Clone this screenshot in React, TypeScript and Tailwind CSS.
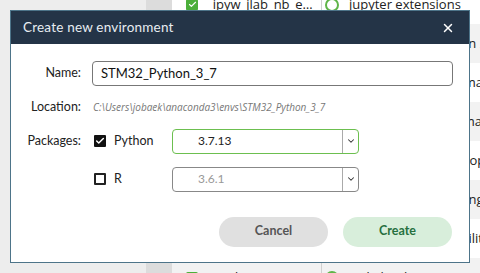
import { X, Check, ChevronDown } from 'lucide-react'

type Row = { name: string; desc: string; bg: string }

const rows: Row[] = [
  { name: '_ipyw_jlab_nb_ext_conf', desc: 'jupyter extensions', bg: 'bg-white' },
  { name: 'alabaster', desc: 'Configurable, python 2+3 compatible sphinx theme', bg: 'bg-[#f2f2f2]' },
  { name: 'anaconda', desc: 'Simplifies package management and deployment', bg: 'bg-white' },
  { name: 'anaconda-client', desc: 'Anaconda.org command line 2 client library', bg: 'bg-[#f2f2f2]' },
  { name: 'anaconda-navigator', desc: 'Anaconda.org desktop gui that allows you', bg: 'bg-white' },
  { name: 'anaconda-project', desc: 'Tool for encapsulating, running, and reproducing', bg: 'bg-[#f2f2f2]' },
  { name: 'anyio', desc: 'High level compatibility layer for multiple, e.g.', bg: 'bg-white' },
  { name: 'appdirs', desc: 'Hide boolean compatibility layer', bg: 'bg-[#f2f2f2]' },
]

function Background() {
  return (
    <div className="flex h-full font-['Open_Sans',sans-serif] text-[13px] text-[#222]">
      <div className="w-[146px] shrink-0 bg-[#ededed]" />
      <div className="w-[26px] shrink-0 bg-[#dcdcdc]" />
      <div className="flex-1 flex flex-col -mt-[15px] overflow-hidden">
        {rows.map((r, i) => (
          <div key={i} className={`flex h-[39px] shrink-0 items-center ${r.bg}`}>
            <div className="w-[14px] shrink-0" />
            <div className="w-[12px] h-[12px] shrink-0 bg-[#4caf3a] rounded-[2px] flex items-center justify-center">
              <Check size={9} strokeWidth={3} className="text-white" />
            </div>
            <div className="w-[121px] shrink-0 pl-[9px] truncate whitespace-nowrap">{r.name}</div>
            <div className="h-full w-px shrink-0 bg-[#d0d0d0] ml-[2px]" />
            <div className="w-[14px] h-[14px] shrink-0 rounded-full border-2 border-[#5fb548] ml-[3px]" />
            <div className="pl-[10px] whitespace-nowrap">{r.desc}</div>
          </div>
        ))}
      </div>
    </div>
  )
}

function Checkbox({ checked }: { checked: boolean }) {
  return checked ? (
    <div className="w-[12px] h-[12px] bg-[#111] rounded-[1px] flex items-center justify-center">
      <Check size={10} strokeWidth={3.5} className="text-white" />
    </div>
  ) : (
    <div className="w-[12px] h-[12px] border-2 border-[#222] rounded-[1px]" />
  )
}

function Select({ value, active }: { value: string; active: boolean }) {
  return (
    <div
      className={`flex w-[187px] h-[25px] rounded-[4px] border ${
        active ? 'border-[#6cbf4f]' : 'border-[#888]'
      }`}
    >
      <div className={`flex-1 pl-[25px] flex items-center text-[12px] ${active ? 'text-[#222]' : 'text-[#999]'}`}>
        {value}
      </div>
      <div className="w-px bg-[#aaa]" />
      <div className="w-[15px] flex items-center justify-center">
        <ChevronDown size={10} strokeWidth={2.5} className="text-[#333]" />
      </div>
    </div>
  )
}

export default function App() {
  return (
    <div className="relative w-[480px] h-[273px] overflow-hidden bg-[#ededed]">
      <Background />

      {/* Dialog */}
      <div className="absolute left-[10px] top-[10px] w-[460px] h-[253px] border border-[#4d7489] bg-white flex flex-col font-['Lato',sans-serif]">
        <div className="h-[33px] bg-[#243447] flex items-center pl-[12px] pr-[14px]">
          <span className="text-[13.5px] text-[#e8edf2] tracking-[0.2px]">Create new environment</span>
          <X size={14} strokeWidth={2.5} className="ml-auto text-white" />
        </div>

        <div className="flex flex-col">
          {/* Name */}
          <div className="flex items-center mt-[17px]">
            <div className="w-[70px] text-right text-[12.5px] text-[#222]">Name:</div>
            <div className="ml-[11px] w-[361px] h-[25px] border border-[#777] rounded-[4px] flex items-center pl-[8px] text-[13px] text-[#111]">
              STM32_Python_3_7
            </div>
          </div>

          {/* Location */}
          <div className="flex items-center mt-[12px]">
            <div className="w-[70px] text-right text-[12.5px] text-[#222]">Location:</div>
            <div className="ml-[12px] text-[10px] italic text-[#777] font-['Open_Sans',sans-serif]">
              C:\Users\jobaek\anaconda3\envs\STM32_Python_3_7
            </div>
          </div>

          {/* Python */}
          <div className="flex items-center mt-[12px]">
            <div className="w-[70px] text-right text-[12.5px] text-[#222]">Packages:</div>
            <div className="ml-[13px]">
              <Checkbox checked />
            </div>
            <div className="ml-[8px] w-[58px] text-[12.5px] text-[#222]">Python</div>
            <Select value="3.7.13" active />
          </div>

          {/* R */}
          <div className="flex items-center mt-[13px]">
            <div className="w-[70px]" />
            <div className="ml-[13px]">
              <Checkbox checked={false} />
            </div>
            <div className="ml-[8px] w-[58px] text-[12.5px] text-[#222]">R</div>
            <Select value="3.6.1" active={false} />
          </div>

          {/* Buttons */}
          <div className="flex justify-end gap-[15px] mt-[25px] pr-[17px]">
            <button className="w-[109px] h-[30px] rounded-full bg-[#e0e0e0] text-[12.5px] font-bold text-[#555]">
              Cancel
            </button>
            <button className="w-[109px] h-[30px] rounded-full bg-[#d8eedb] text-[12.5px] font-bold text-[#26703f]">
              Create
            </button>
          </div>
        </div>
      </div>
    </div>
  )
}
